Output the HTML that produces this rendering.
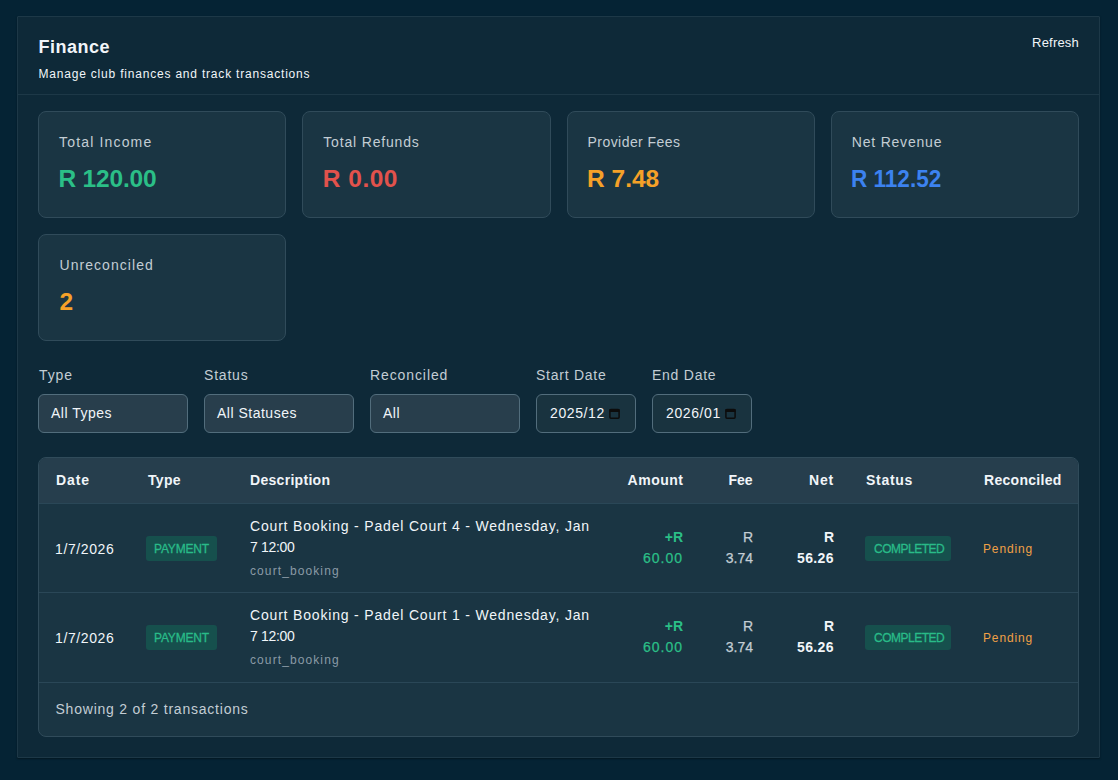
<!DOCTYPE html>
<html><head><meta charset="utf-8"><title>Finance</title>
<style>
html,body{margin:0;padding:0;}
body{width:1118px;height:780px;background:#052334;position:relative;overflow:hidden;font-family:"Liberation Sans",sans-serif;}
.t{position:absolute;white-space:nowrap;}
.sk{-webkit-text-stroke:0.3px currentColor;}
.sk2{-webkit-text-stroke:0.25px currentColor;}
.r{position:absolute;box-sizing:border-box;}
</style></head><body>
<div class="r" style="left:17px;top:16px;width:1083px;height:742px;background:#0e2938;border:1px solid #1d3847;box-sizing:border-box;border-radius:1px;box-shadow:0 1px 2px rgba(0,0,0,0.35);"></div>
<div class="r" style="left:18px;top:94px;width:1081px;height:1px;background:#1d3847;"></div>
<div class="t" style="top:38.36px;font-size:18px;line-height:18px;color:#f1f5f9;font-weight:700;letter-spacing:0.5px;left:38.5px;">Finance</div>
<div class="t" style="top:67.64px;font-size:12px;line-height:12px;color:#f1f5f9;font-weight:400;letter-spacing:0.8px;left:38.5px;">Manage club finances and track transactions</div>
<div class="t" style="top:35.90px;font-size:13px;line-height:13px;color:#f1f5f9;font-weight:400;letter-spacing:0.2px;right:39px;text-align:right;">Refresh</div>
<div class="r" style="left:38px;top:111px;width:248.25px;height:107px;background:#1a3543;border:1px solid #304b5a;box-sizing:border-box;border-radius:8px;"></div>
<div class="t" style="top:134.85px;font-size:14px;line-height:14px;color:#c3cdd4;font-weight:400;letter-spacing:1.17px;left:59px;">Total Income</div>
<div class="t" style="top:167.26px;font-size:24.5px;line-height:24.5px;color:#2bbf87;font-weight:700;letter-spacing:-0.2px;left:58.5px;">R 120.00</div>
<div class="r" style="left:302.25px;top:111px;width:248.25px;height:107px;background:#1a3543;border:1px solid #304b5a;box-sizing:border-box;border-radius:8px;"></div>
<div class="t" style="top:134.85px;font-size:14px;line-height:14px;color:#c3cdd4;font-weight:400;letter-spacing:0.83px;left:323.25px;">Total Refunds</div>
<div class="t" style="top:167.26px;font-size:24.5px;line-height:24.5px;color:#e2524c;font-weight:700;letter-spacing:0.5px;left:322.75px;">R 0.00</div>
<div class="r" style="left:566.5px;top:111px;width:248.25px;height:107px;background:#1a3543;border:1px solid #304b5a;box-sizing:border-box;border-radius:8px;"></div>
<div class="t" style="top:134.85px;font-size:14px;line-height:14px;color:#c3cdd4;font-weight:400;letter-spacing:0.45px;left:587.5px;">Provider Fees</div>
<div class="t" style="top:167.26px;font-size:24.5px;line-height:24.5px;color:#f5a128;font-weight:700;left:587.0px;">R 7.48</div>
<div class="r" style="left:830.75px;top:111px;width:248.25px;height:107px;background:#1a3543;border:1px solid #304b5a;box-sizing:border-box;border-radius:8px;"></div>
<div class="t" style="top:134.85px;font-size:14px;line-height:14px;color:#c3cdd4;font-weight:400;letter-spacing:0.8px;left:851.75px;">Net Revenue</div>
<div class="t" style="top:167.26px;font-size:24.5px;line-height:24.5px;color:#3c82f0;font-weight:700;transform:scaleX(0.92);transform-origin:left center;left:851.25px;">R 112.52</div>
<div class="r" style="left:38px;top:234px;width:248.25px;height:107px;background:#1a3543;border:1px solid #304b5a;box-sizing:border-box;border-radius:8px;"></div>
<div class="t" style="top:257.95px;font-size:14px;line-height:14px;color:#c3cdd4;font-weight:400;letter-spacing:1.05px;left:59.5px;">Unreconciled</div>
<div class="t" style="top:290.26px;font-size:24.5px;line-height:24.5px;color:#f5a128;font-weight:700;left:59.5px;">2</div>
<div class="t" style="top:368.15px;font-size:14px;line-height:14px;color:#c3cdd4;font-weight:400;letter-spacing:0.8999999999999999px;left:39px;">Type</div>
<div class="r" style="left:38px;top:394px;width:150px;height:39px;background:#283e4c;border:1px solid #526d7c;box-sizing:border-box;border-radius:6px;"></div>
<div class="t" style="top:406.15px;font-size:14px;line-height:14px;color:#f1f5f9;font-weight:400;letter-spacing:0.5px;left:51px;">All Types</div>
<div class="t" style="top:368.15px;font-size:14px;line-height:14px;color:#c3cdd4;font-weight:400;letter-spacing:0.8px;left:204px;">Status</div>
<div class="r" style="left:204px;top:394px;width:150px;height:39px;background:#283e4c;border:1px solid #526d7c;box-sizing:border-box;border-radius:6px;"></div>
<div class="t" style="top:406.15px;font-size:14px;line-height:14px;color:#f1f5f9;font-weight:400;letter-spacing:0.5px;left:217px;">All Statuses</div>
<div class="t" style="top:368.15px;font-size:14px;line-height:14px;color:#c3cdd4;font-weight:400;letter-spacing:0.8999999999999999px;left:370px;">Reconciled</div>
<div class="r" style="left:370px;top:394px;width:150px;height:39px;background:#283e4c;border:1px solid #526d7c;box-sizing:border-box;border-radius:6px;"></div>
<div class="t" style="top:406.15px;font-size:14px;line-height:14px;color:#f1f5f9;font-weight:400;letter-spacing:0.5px;left:383px;">All</div>
<div class="t" style="top:368.15px;font-size:14px;line-height:14px;color:#c3cdd4;font-weight:400;letter-spacing:0.75px;left:536px;">Start Date</div>
<div class="r" style="left:536px;top:394px;width:100px;height:39px;background:#19333f;border:1px solid #526d7c;box-sizing:border-box;border-radius:6px;"></div>
<div class="t" style="top:405.95px;font-size:14px;line-height:14px;color:#f1f5f9;font-weight:400;letter-spacing:0.6px;left:550px;">2025/12</div>
<svg class="r" style="left:609px;top:408px" width="11" height="11" viewBox="0 0 11 11"><rect x="0.9" y="1.4" width="9.2" height="8.8" rx="1" fill="none" stroke="#0c0c0c" stroke-width="1.5"/><rect x="0.5" y="1" width="10" height="3" fill="#0c0c0c"/></svg>
<div class="t" style="top:368.15px;font-size:14px;line-height:14px;color:#c3cdd4;font-weight:400;letter-spacing:0.75px;left:652px;">End Date</div>
<div class="r" style="left:652px;top:394px;width:100px;height:39px;background:#19333f;border:1px solid #526d7c;box-sizing:border-box;border-radius:6px;"></div>
<div class="t" style="top:405.95px;font-size:14px;line-height:14px;color:#f1f5f9;font-weight:400;letter-spacing:0.6px;left:666px;">2026/01</div>
<svg class="r" style="left:725px;top:408px" width="11" height="11" viewBox="0 0 11 11"><rect x="0.9" y="1.4" width="9.2" height="8.8" rx="1" fill="none" stroke="#0c0c0c" stroke-width="1.5"/><rect x="0.5" y="1" width="10" height="3" fill="#0c0c0c"/></svg>
<div class="r" style="left:38px;top:457px;width:1041px;height:280px;background:#1a3543;border:1px solid #304b5a;box-sizing:border-box;border-radius:8px;overflow:hidden;"></div>
<div class="r" style="left:39px;top:458px;width:1039px;height:45px;background:#263e4d;border-radius:7px 7px 0 0;"></div>
<div class="r" style="left:39px;top:503px;width:1039px;height:1px;background:#2a4757;"></div>
<div class="r" style="left:39px;top:592px;width:1039px;height:1px;background:#2a4757;"></div>
<div class="r" style="left:39px;top:682px;width:1039px;height:1px;background:#2a4757;"></div>
<div class="t" style="top:473.15px;font-size:14px;line-height:14px;color:#f1f5f9;font-weight:700;letter-spacing:0.9px;left:56px;">Date</div>
<div class="t" style="top:473.15px;font-size:14px;line-height:14px;color:#f1f5f9;font-weight:700;letter-spacing:0.3px;left:148px;">Type</div>
<div class="t" style="top:473.15px;font-size:14px;line-height:14px;color:#f1f5f9;font-weight:700;letter-spacing:0.3px;left:250px;">Description</div>
<div class="t" style="top:473.15px;font-size:14px;line-height:14px;color:#f1f5f9;font-weight:700;letter-spacing:0.5px;right:434.5px;text-align:right;">Amount</div>
<div class="t" style="top:473.15px;font-size:14px;line-height:14px;color:#f1f5f9;font-weight:700;right:365.5px;text-align:right;">Fee</div>
<div class="t" style="top:473.15px;font-size:14px;line-height:14px;color:#f1f5f9;font-weight:700;letter-spacing:0.8px;right:284px;text-align:right;">Net</div>
<div class="t" style="top:473.15px;font-size:14px;line-height:14px;color:#f1f5f9;font-weight:700;letter-spacing:0.7px;left:866px;">Status</div>
<div class="t" style="top:473.15px;font-size:14px;line-height:14px;color:#f1f5f9;font-weight:700;letter-spacing:0.3px;left:984px;">Reconciled</div>
<div class="t" style="top:541.95px;font-size:14px;line-height:14px;color:#f1f5f9;font-weight:400;letter-spacing:0.6px;left:55px;">1/7/2026</div>
<div class="r" style="left:146px;top:536px;width:71px;height:25px;background:#16504d;border-radius:3px;"></div>
<div class="t sk" style="top:543.14px;font-size:12px;line-height:12px;color:#29bb88;font-weight:400;letter-spacing:-0.2px;left:154px;">PAYMENT</div>
<div class="t" style="top:519.35px;font-size:14px;line-height:14px;color:#f1f5f9;font-weight:400;letter-spacing:0.82px;left:250px;">Court Booking - Padel Court 4 - Wednesday, Jan</div>
<div class="t" style="top:540.35px;font-size:14px;line-height:14px;color:#f1f5f9;font-weight:400;letter-spacing:-0.33px;left:250px;">7 12:00</div>
<div class="t" style="top:565.04px;font-size:12px;line-height:12px;color:#8a9aa6;font-weight:400;letter-spacing:1.1px;left:250px;">court_booking</div>
<div class="t" style="top:529.95px;font-size:14px;line-height:14px;color:#2bbf87;font-weight:700;right:435px;text-align:right;">+R</div>
<div class="t sk2" style="top:550.75px;font-size:14px;line-height:14px;color:#2bbf87;font-weight:400;letter-spacing:1.0px;right:435px;text-align:right;">60.00</div>
<div class="t sk2" style="top:529.95px;font-size:14px;line-height:14px;color:#c3cdd4;font-weight:400;right:365px;text-align:right;">R</div>
<div class="t sk2" style="top:550.75px;font-size:14px;line-height:14px;color:#c3cdd4;font-weight:400;right:365px;text-align:right;">3.74</div>
<div class="t" style="top:529.95px;font-size:14px;line-height:14px;color:#f1f5f9;font-weight:700;right:284px;text-align:right;">R</div>
<div class="t" style="top:550.75px;font-size:14px;line-height:14px;color:#f1f5f9;font-weight:700;letter-spacing:0.4px;right:284px;text-align:right;">56.26</div>
<div class="r" style="left:865px;top:536px;width:86px;height:25px;background:#16504d;border-radius:3px;"></div>
<div class="t sk" style="top:543.14px;font-size:12px;line-height:12px;color:#29bb88;font-weight:400;letter-spacing:-0.5px;left:874px;">COMPLETED</div>
<div class="t" style="top:542.54px;font-size:12px;line-height:12px;color:#f0a046;font-weight:400;letter-spacing:0.85px;left:983px;">Pending</div>
<div class="t" style="top:630.95px;font-size:14px;line-height:14px;color:#f1f5f9;font-weight:400;letter-spacing:0.6px;left:55px;">1/7/2026</div>
<div class="r" style="left:146px;top:625px;width:71px;height:25px;background:#16504d;border-radius:3px;"></div>
<div class="t sk" style="top:632.14px;font-size:12px;line-height:12px;color:#29bb88;font-weight:400;letter-spacing:-0.2px;left:154px;">PAYMENT</div>
<div class="t" style="top:608.35px;font-size:14px;line-height:14px;color:#f1f5f9;font-weight:400;letter-spacing:0.82px;left:250px;">Court Booking - Padel Court 1 - Wednesday, Jan</div>
<div class="t" style="top:629.35px;font-size:14px;line-height:14px;color:#f1f5f9;font-weight:400;letter-spacing:-0.33px;left:250px;">7 12:00</div>
<div class="t" style="top:654.04px;font-size:12px;line-height:12px;color:#8a9aa6;font-weight:400;letter-spacing:1.1px;left:250px;">court_booking</div>
<div class="t" style="top:618.95px;font-size:14px;line-height:14px;color:#2bbf87;font-weight:700;right:435px;text-align:right;">+R</div>
<div class="t sk2" style="top:639.75px;font-size:14px;line-height:14px;color:#2bbf87;font-weight:400;letter-spacing:1.0px;right:435px;text-align:right;">60.00</div>
<div class="t sk2" style="top:618.95px;font-size:14px;line-height:14px;color:#c3cdd4;font-weight:400;right:365px;text-align:right;">R</div>
<div class="t sk2" style="top:639.75px;font-size:14px;line-height:14px;color:#c3cdd4;font-weight:400;right:365px;text-align:right;">3.74</div>
<div class="t" style="top:618.95px;font-size:14px;line-height:14px;color:#f1f5f9;font-weight:700;right:284px;text-align:right;">R</div>
<div class="t" style="top:639.75px;font-size:14px;line-height:14px;color:#f1f5f9;font-weight:700;letter-spacing:0.4px;right:284px;text-align:right;">56.26</div>
<div class="r" style="left:865px;top:625px;width:86px;height:25px;background:#16504d;border-radius:3px;"></div>
<div class="t sk" style="top:632.14px;font-size:12px;line-height:12px;color:#29bb88;font-weight:400;letter-spacing:-0.5px;left:874px;">COMPLETED</div>
<div class="t" style="top:631.54px;font-size:12px;line-height:12px;color:#f0a046;font-weight:400;letter-spacing:0.85px;left:983px;">Pending</div>
<div class="t" style="top:702.15px;font-size:14px;line-height:14px;color:#c3cdd4;font-weight:400;letter-spacing:0.78px;left:55.5px;">Showing 2 of 2 transactions</div>
</body></html>
